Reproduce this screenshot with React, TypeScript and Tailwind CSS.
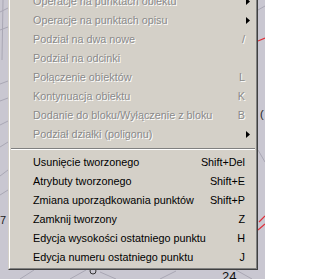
import React from "react";

type Item = {
  label: string;
  shortcut?: string;
  submenu?: boolean;
  disabled?: boolean;
};

const topItems: Item[] = [
  { label: "Operacje na punktach obiektu", submenu: true, disabled: true },
  { label: "Operacje na punktach opisu", submenu: true, disabled: true },
  { label: "Podział na dwa nowe", shortcut: "/", disabled: true },
  { label: "Podział na odcinki", disabled: true },
  { label: "Połączenie obiektów", shortcut: "L", disabled: true },
  { label: "Kontynuacja obiektu", shortcut: "K", disabled: true },
  { label: "Dodanie do bloku/Wyłączenie z bloku", shortcut: "B", disabled: true },
  { label: "Podział działki (poligonu)", submenu: true, disabled: true },
];

const bottomItems: Item[] = [
  { label: "Usunięcie tworzonego", shortcut: "Shift+Del" },
  { label: "Atrybuty tworzonego", shortcut: "Shift+E" },
  { label: "Zmiana uporządkowania punktów", shortcut: "Shift+P" },
  { label: "Zamknij tworzony", shortcut: "Z" },
  { label: "Edycja wysokości ostatniego punktu", shortcut: "H" },
  { label: "Edycja numeru ostatniego punktu", shortcut: "J" },
];

function MenuRow({ item }: { item: Item }) {
  const tone = item.disabled
    ? "text-[#8a8a8a] [text-shadow:1px_1px_0_#ffffff]"
    : "text-black";

  return (
    <div className={`flex h-[19px] items-center pl-[22px] ${tone}`}>
      <span className="flex-1 whitespace-nowrap">{item.label}</span>
      {item.shortcut && (
        <span className="mr-[10px] whitespace-nowrap">{item.shortcut}</span>
      )}
      {item.submenu && (
        <svg width="4" height="7" viewBox="0 0 4 7" className="mr-[5px]">
          <path d="M0 0 L4 3.5 L0 7 Z" fill="#000" />
        </svg>
      )}
    </div>
  );
}

function Canvas() {
  return (
    <svg
      className="absolute inset-0"
      width="265"
      height="279"
      viewBox="0 0 265 279"
    >
      <g stroke="#a9a7b4" strokeWidth="1" fill="none">
        <path d="M0 12 L8 8" />
        <path d="M0 30 L8 27" />
        <path d="M0 84 L8 81" />
        <path d="M0 101 L8 98" />
        <path d="M0 125 L8 121" />
        <path d="M0 147 L8 142" />
        <path d="M0 176 L8 170" />
        <path d="M0 195 L8 190" />
        <path d="M3 0 L2 60" />
        <path d="M20 279 L34 270" />
        <path d="M70 279 L86 270" />
        <path d="M100 272 L116 279" />
        <path d="M160 279 L176 271" />
        <path d="M236 270 L252 279" />
        <path d="M258 150 L265 162" />
        <path d="M258 10 L265 6" />
      </g>
      <circle cx="93" cy="271" r="3" fill="none" stroke="#333" strokeWidth="1" />
      <g stroke="#e0303a" strokeWidth="1.2" fill="none">
        <path d="M258 41 L265 38" />
        <path d="M259 222 L265 216" />
        <path d="M258 230 L265 224" />
      </g>
      <text x="0" y="224" fontSize="11" fill="#222" fontFamily="Liberation Sans, sans-serif">
        7
      </text>
      <text x="260" y="118" fontSize="11" fill="#222" fontFamily="Liberation Sans, sans-serif">
        (
      </text>
      <text x="222" y="281" fontSize="13" fill="#111" fontFamily="Liberation Sans, sans-serif">
        24
      </text>
    </svg>
  );
}

export default function App() {
  return (
    <div className="relative h-[279px] w-[265px] overflow-hidden bg-[#c9c7d1] font-['Liberation_Sans',Arial,sans-serif] text-[10.8px]">
      <Canvas />
      <div className="relative ml-[8px] -mt-[11px] w-[250px] border-b border-l border-r border-t border-b-[#404040] border-l-[#d4d0c8] border-r-[#404040] border-t-[#d4d0c8] bg-[#d4d0c8]">
        <div className="border-b border-l border-r border-t border-b-[#808080] border-l-white border-r-[#808080] border-t-white p-px">
          {topItems.map((item) => (
            <MenuRow key={item.label} item={item} />
          ))}
          <div className="flex h-[9px] flex-col justify-center">
            <div className="h-px bg-[#808080]" />
            <div className="h-px bg-white" />
          </div>
          {bottomItems.map((item) => (
            <MenuRow key={item.label} item={item} />
          ))}
        </div>
      </div>
    </div>
  );
}
